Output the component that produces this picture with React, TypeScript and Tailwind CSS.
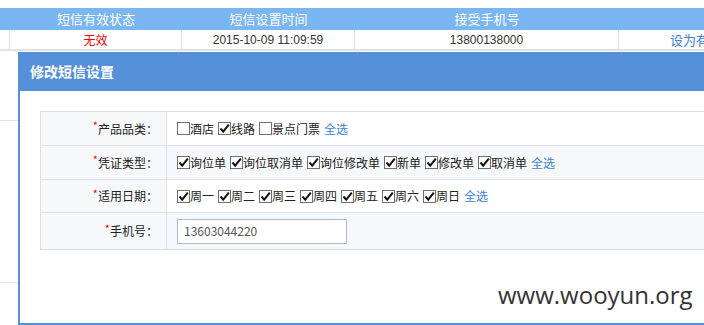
import React from "react";

const font = { fontFamily: '"Noto Sans CJK SC", "Liberation Sans", sans-serif' };

function Box({ checked }: { checked: boolean }) {
  return (
    <span className="inline-flex h-[13px] w-[13px] shrink-0 items-center justify-center border border-[#6f6f6f] bg-white">
      {checked && (
        <svg width="11" height="11" viewBox="0 0 11 11">
          <path d="M1.5 5.5 L4.2 8.6 L9.8 1.6" fill="none" stroke="#111" strokeWidth="2" />
        </svg>
      )}
    </span>
  );
}

function Opt({ label, checked }: { label: string; checked: boolean }) {
  return (
    <span className="mr-[4px] inline-flex items-center">
      <Box checked={checked} />
      <span>{label}</span>
    </span>
  );
}

function Label({ text }: { text: string }) {
  return (
    <div className="flex w-[126px] shrink-0 items-center justify-end border-r border-[#dcdfe6] bg-[#f7f8fa] pr-[8px] text-[#222]">
      <span className="relative -top-[3px] text-[11px] text-[#f00]">*</span>
      <span>{text}：</span>
    </div>
  );
}

const rows = [
  {
    label: "产品品类",
    opts: [
      ["酒店", false],
      ["线路", true],
      ["景点门票", false],
    ] as [string, boolean][],
    h: "h-[34px]",
    bg: "bg-white",
  },
  {
    label: "凭证类型",
    opts: [
      ["询位单", true],
      ["询位取消单", true],
      ["询位修改单", true],
      ["新单", true],
      ["修改单", true],
      ["取消单", true],
    ] as [string, boolean][],
    h: "h-[34px]",
    bg: "bg-[#f7f8fa]",
  },
  {
    label: "适用日期",
    opts: [
      ["周一", true],
      ["周二", true],
      ["周三", true],
      ["周四", true],
      ["周五", true],
      ["周六", true],
      ["周日", true],
    ] as [string, boolean][],
    h: "h-[33px]",
    bg: "bg-white",
  },
];

export default function App() {
  return (
    <div className="relative h-[325px] w-[704px] overflow-hidden bg-white text-[12px]" style={font}>
      {/* background list */}
      <div className="w-[800px] pt-[8px]">
        <div className="flex h-[22px] items-center bg-[#7ab6f2] text-[13px] text-white">
          <div className="w-[10px] shrink-0" />
          <div className="w-[172px] shrink-0 text-center">短信有效状态</div>
          <div className="w-[173px] shrink-0 text-center">短信设置时间</div>
          <div className="w-[264px] shrink-0 text-center">接受手机号</div>
          <div className="flex-1" />
        </div>
        <div className="flex h-[21px] items-stretch border-b-2 border-[#dfe2ea]">
          <div className="w-[10px] shrink-0 border-r border-[#dcdfe6]" />
          <div className="flex w-[172px] shrink-0 items-center justify-center border-r border-[#dcdfe6] text-[#e00]">无效</div>
          <div className="flex w-[173px] shrink-0 items-center justify-center border-r border-[#dcdfe6] text-[#333]" style={{ fontFamily: '"Liberation Sans", sans-serif' }}>
            2015-10-09 11:09:59
          </div>
          <div className="flex w-[264px] shrink-0 items-center justify-center border-r border-[#dcdfe6] text-[#333]" style={{ fontFamily: '"Liberation Sans", sans-serif' }}>
            13800138000
          </div>
          <div className="flex flex-1 items-center whitespace-nowrap pl-[51px] text-[13px] text-[#3b84d8]">设为有效</div>
        </div>
        <div className="h-[70px] border-b border-[#dfe2ea]" />
        <div className="h-[162px] border-b border-[#dfe6ee]" />
      </div>

      {/* dialog */}
      <div className="absolute left-[18px] top-[52px] h-[273px] w-[700px] border-b-2 border-l-2 border-[#5590d8] bg-white">
        <div className="-ml-[2px] flex h-[39px] items-center bg-[#5590d8] pl-[12px] text-[14px] font-bold text-white">
          修改短信设置
        </div>
        <div className="ml-[20px] mt-[20px] border-l border-t border-[#dcdfe6]">
          {rows.map((r) => (
            <div key={r.label} className={`flex ${r.h} border-b border-[#dcdfe6]`}>
              <Label text={r.label} />
              <div className={`flex flex-1 items-center whitespace-nowrap pl-[10px] text-[#222] ${r.bg}`}>
                {r.opts.map(([t, c]) => (
                  <Opt key={t} label={t} checked={c} />
                ))}
                <span className="text-[#3b84d8]">全选</span>
              </div>
            </div>
          ))}
          <div className="flex h-[37px] border-b border-[#dcdfe6]">
            <Label text="手机号" />
            <div className="flex flex-1 items-center bg-[#f7f8fa] pl-[10px]">
              <div className="flex h-[25px] w-[170px] items-center border border-[#a9bdd4] bg-white pl-[6px] text-[#555]">
                13603044220
              </div>
            </div>
          </div>
        </div>
        <div
          className="absolute left-[478px] top-[225px] text-[24px] text-[#333]"
          style={{ fontFamily: '"Open Sans", sans-serif' }}
        >
          www.wooyun.org
        </div>
      </div>
    </div>
  );
}
